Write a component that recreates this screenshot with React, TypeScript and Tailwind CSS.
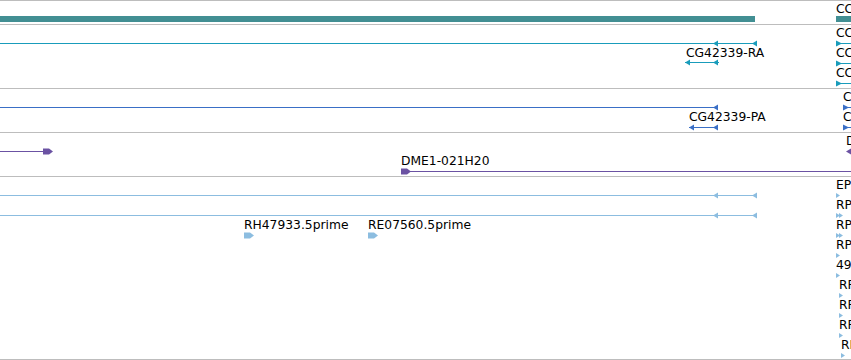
import React from 'react';

// colours of the feature tracks
const TEAL = '#428f93';
const CYAN = '#199cbb';
const BLUE = '#3a6fc6';
const PURPLE = '#6b52a3';
const SKY = '#8cbde0';

type Label = { text: string; x: number; base: number };

// left pointing arrowhead, tip at x
function Lt({ x, y, c }: { x: number; y: number; c: string }) {
  const m = y + 0.5;
  return <polygon points={`${x},${m} ${x + 5},${m - 3} ${x + 5},${m + 3}`} fill={c} />;
}

// right pointing arrowhead, back at x
function Rt({ x, y, c }: { x: number; y: number; c: string }) {
  const m = y + 0.5;
  return <polygon points={`${x},${m - 3} ${x + 6},${m} ${x},${m + 3}`} fill={c} />;
}

// block with a pointed end (start of a plus strand feature)
function Pent({ x, y, c }: { x: number; y: number; c: string }) {
  const m = y + 0.5;
  return (
    <polygon
      points={`${x},${m - 3} ${x + 6},${m - 3} ${x + 10},${m} ${x + 6},${m + 3} ${x},${m + 3}`}
      fill={c}
    />
  );
}

function Line({ x, y, w, c }: { x: number; y: number; w: number; c: string }) {
  return <rect x={x} y={y} width={w} height={1} fill={c} />;
}

// small triangle used by the dense EST rows
function Tiny({ x, y, c }: { x: number; y: number; c: string }) {
  const m = y + 0.5;
  return <polygon points={`${x},${m - 2.5} ${x + 4},${m} ${x},${m + 2.5}`} fill={c} />;
}

function Track({
  top,
  h,
  className,
  labels,
  children,
}: {
  top: number;
  h: number;
  className: string;
  labels: Label[];
  children: React.ReactNode;
}) {
  return (
    <div className={`relative overflow-hidden border-b border-[#bdbdbd] ${className}`}>
      <svg className="absolute left-0 top-0" width={851} height={h} viewBox={`0 ${top} 851 ${h}`}>
        {children}
      </svg>
      {labels.map((l, i) => (
        <span
          key={i}
          className="absolute whitespace-nowrap text-[12.3px] leading-[12px] text-black"
          style={{ left: l.x, top: l.base - 10 - top }}
        >
          {l.text}
        </span>
      ))}
    </div>
  );
}

const estRows = [
  { t: 'EP', x: 836, y: 195, dbl: false },
  { t: 'RP', x: 836, y: 215, dbl: true },
  { t: 'RP', x: 836, y: 235, dbl: true },
  { t: 'RP', x: 836, y: 255, dbl: false },
  { t: '49', x: 836, y: 275, dbl: false },
  { t: 'RF', x: 839, y: 295, dbl: false },
  { t: 'RF', x: 839, y: 315, dbl: false },
  { t: 'RF', x: 839, y: 335, dbl: false },
  { t: 'RF', x: 841, y: 355, dbl: false },
];

export default function App() {
  return (
    <div
      className="h-[360px] w-[851px] overflow-hidden border-t border-[#bdbdbd] bg-white"
      style={{ fontFamily: '"DejaVu Sans", sans-serif' }}
    >
      {/* gene span */}
      <Track top={1} h={23} className="h-[24px]" labels={[{ text: 'CC', x: 836, base: 13 }]}>
        <rect x={0} y={16} width={755} height={6} fill={TEAL} />
        <rect x={836} y={16} width={15} height={6} fill={TEAL} />
      </Track>

      {/* transcripts */}
      <Track
        top={25}
        h={63}
        className="h-[64px]"
        labels={[
          { text: 'CG42339-RA', x: 686, base: 57 },
          { text: 'CC', x: 836, base: 37 },
          { text: 'CC', x: 836, base: 57 },
          { text: 'CC', x: 836, base: 77 },
        ]}
      >
        <Line x={0} y={43} w={757} c={CYAN} />
        <Lt x={713} y={43} c={CYAN} />
        <Lt x={752} y={43} c={CYAN} />
        <Line x={685} y={62} w={34} c={CYAN} />
        <Lt x={685} y={62} c={CYAN} />
        <Lt x={713} y={62} c={CYAN} />
        {[43, 63, 83].map((y) => (
          <g key={y}>
            <Line x={836} y={y} w={15} c={CYAN} />
            <Rt x={836} y={y} c={CYAN} />
          </g>
        ))}
      </Track>

      {/* proteins */}
      <Track
        top={89}
        h={43}
        className="h-[44px]"
        labels={[
          { text: 'CG42339-PA', x: 689, base: 121 },
          { text: 'C', x: 843, base: 101 },
          { text: 'C', x: 843, base: 121 },
        ]}
      >
        <Line x={0} y={107} w={718} c={BLUE} />
        <Lt x={713} y={107} c={BLUE} />
        <Line x={689} y={127} w={29} c={BLUE} />
        <Lt x={689} y={127} c={BLUE} />
        <Lt x={713} y={127} c={BLUE} />
        {[107, 127].map((y) => (
          <g key={y}>
            <Line x={843} y={y} w={8} c={BLUE} />
            <Rt x={843} y={y} c={BLUE} />
          </g>
        ))}
      </Track>

      {/* clones */}
      <Track
        top={133}
        h={43}
        className="h-[44px]"
        labels={[
          { text: 'DME1-021H20', x: 401, base: 165 },
          { text: 'D', x: 846, base: 145 },
        ]}
      >
        <Line x={0} y={151} w={46} c={PURPLE} />
        <Pent x={43} y={151} c={PURPLE} />
        <Line x={401} y={171} w={450} c={PURPLE} />
        <Pent x={401} y={171} c={PURPLE} />
        <Lt x={846} y={151} c={PURPLE} />
      </Track>

      {/* ESTs */}
      <Track
        top={177}
        h={182}
        className="h-[183px]"
        labels={[
          { text: 'RH47933.5prime', x: 244, base: 229 },
          { text: 'RE07560.5prime', x: 368, base: 229 },
          ...estRows.map((r) => ({ text: r.t, x: r.x, base: r.y - 6 })),
        ]}
      >
        {[195, 215].map((y) => (
          <g key={y}>
            <Line x={0} y={y} w={757} c={SKY} />
            <Lt x={713} y={y} c={SKY} />
            <Lt x={752} y={y} c={SKY} />
          </g>
        ))}
        <Pent x={244} y={235} c={SKY} />
        <Pent x={368} y={235} c={SKY} />
        {estRows.map((r) => (
          <g key={r.y}>
            <Tiny x={r.x} y={r.y} c={SKY} />
            {r.dbl && <Tiny x={r.x + 3} y={r.y} c={SKY} />}
          </g>
        ))}
      </Track>
    </div>
  );
}
